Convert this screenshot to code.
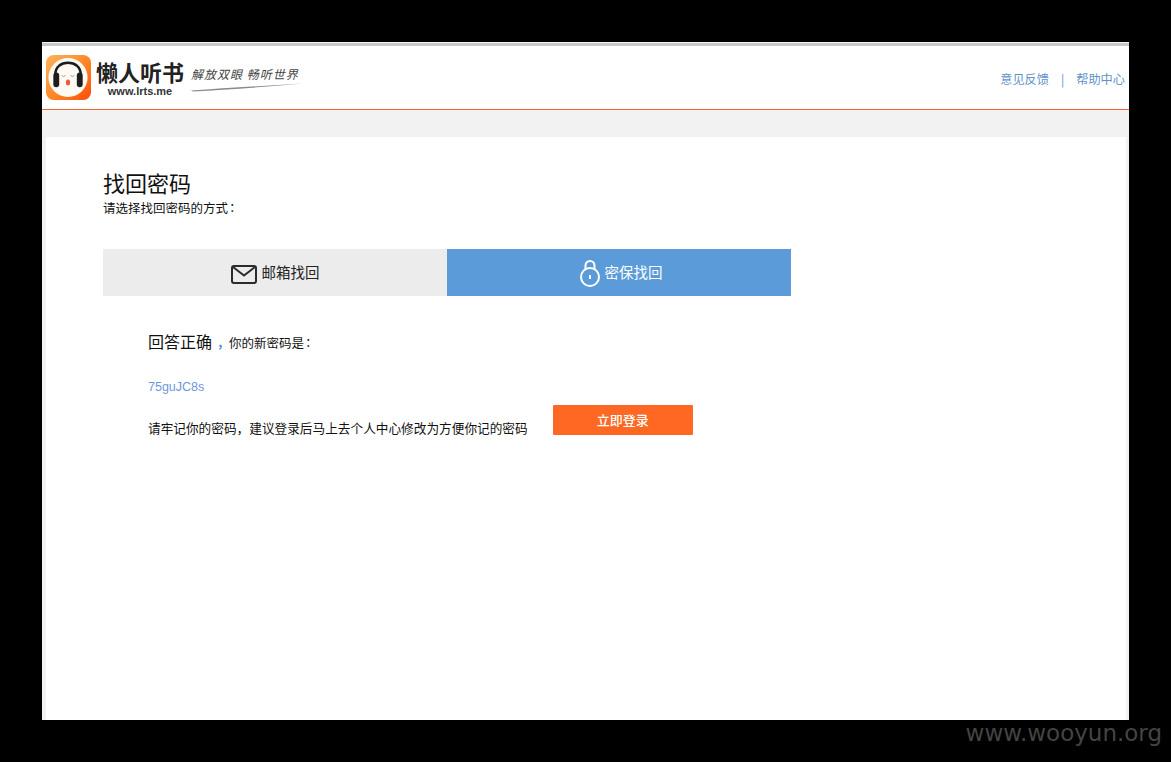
<script lang="ts">
    const links = ["意见反馈", "帮助中心"];
</script>

<div class="screen">
    <div class="page">
        <header class="top">
            <div class="brand">
                <svg class="app-icon" width="45" height="45" viewBox="0 0 46 46">
                    <defs>
                        <linearGradient id="iconBg" x1="0" y1="0" x2="1" y2="1">
                            <stop offset="0" stop-color="#ffb45c" />
                            <stop offset="0.6" stop-color="#ff7f1f" />
                            <stop offset="1" stop-color="#fc4a0c" />
                        </linearGradient>
                    </defs>
                    <rect width="46" height="46" rx="8" fill="url(#iconBg)" />
                    <circle cx="22.5" cy="23" r="20" fill="#fdf9f3" />
                    <path d="M9.5 27V20C9.5 12 15.5 8 22.5 8s13 4 13 12v7" fill="none" stroke="#1d1d1d" stroke-width="2.5" />
                    <rect x="7.5" y="18" width="6" height="15" rx="3" fill="#1d1d1d" />
                    <rect x="31.5" y="18" width="6" height="15" rx="3" fill="#1d1d1d" />
                    <path d="M16 21q2 2 4 0M25 21q2 2 4 0" fill="none" stroke="#888" stroke-width="0.8" />
                    <ellipse cx="22.5" cy="28" rx="2.2" ry="3" fill="#ef5a3c" />
                </svg>
                <div class="wordmark">
                    <span class="name">懒人听书</span>
                    <span class="url">www.lrts.me</span>
                </div>
                <div class="slogan">
                    <span>解放双眼 畅听世界</span>
                    <svg width="112" height="10" viewBox="0 0 112 10">
                        <path d="M0 8.5Q50 5 112 1.5Q50 7 2 9.5Z" fill="#8a8a8a" />
                    </svg>
                </div>
            </div>
            <nav class="links">
                <span>{links[0]}</span>
                <span class="sep">|</span>
                <span>{links[1]}</span>
            </nav>
        </header>

        <main class="band">
            <section class="card">
                <h1>找回密码</h1>
                <p class="hint">请选择找回密码的方式<span class="colon">：</span></p>

                <div class="tabs">
                    <div class="tab">
                        <svg class="mail" width="26" height="19" viewBox="0 0 26 19" fill="none" stroke="#2b2b2b" stroke-width="2">
                            <rect x="1" y="1" width="24" height="17" rx="2" />
                            <path d="M2 2l11 8.5L24 2" />
                        </svg>
                        <span>邮箱找回</span>
                    </div>
                    <div class="tab active">
                        <svg class="lock" width="20" height="27" viewBox="0 0 20 27" fill="none" stroke="#fff" stroke-width="2">
                            <circle cx="10" cy="17" r="9" />
                            <path d="M5.5 9.5V5.5a4.5 4.5 0 0 1 9 0V9.5" />
                            <path d="M10 15v4" />
                        </svg>
                        <span>密保找回</span>
                    </div>
                </div>

                <div class="result">
                    <p class="answer"><span class="big">回答正确</span><span class="comma">，</span>你的新密码是<span class="colon">：</span></p>
                    <p class="password">75guJC8s</p>
                    <div class="notice">
                        <p>请牢记你的密码，建议登录后马上去个人中心修改为方便你记的密码</p>
                        <button type="button">立即登录</button>
                    </div>
                </div>
            </section>
        </main>
    </div>
    <div class="watermark">www.wooyun.org</div>
</div>

<style>
    :global(body) {
        margin: 0;
        background: #000;
    }

    .screen {
        position: relative;
        width: 1171px;
        height: 762px;
        padding: 42px 42px 0;
        box-sizing: border-box;
        overflow: hidden;
        background: #000;
        font-family: "Noto Sans CJK SC", "Liberation Sans", sans-serif;
        color: #111;
    }

    .page {
        width: 1087px;
        height: 678px;
        display: flex;
        flex-direction: column;
        background: #f2f2f2;
    }

    .top {
        height: 64px;
        box-sizing: border-box;
        margin-top: 4px;
        padding: 0 4px;
        display: flex;
        align-items: center;
        justify-content: space-between;
        background: #fff;
        border-bottom: 1px solid #ee6a35;
        box-shadow: 0 -3px 0 #c9c9c9;
    }

    .brand {
        display: flex;
        align-items: center;
    }

    .wordmark {
        display: flex;
        flex-direction: column;
        align-items: center;
        margin-left: 5px;
    }

    .name {
        font-size: 22px;
        line-height: 28px;
        font-weight: 700;
        color: #222;
    }

    .url {
        font-family: "Liberation Sans", sans-serif;
        font-size: 11px;
        line-height: 13px;
        font-weight: 700;
        color: #333;
    }

    .slogan {
        display: flex;
        flex-direction: column;
        margin-left: 7px;
        margin-top: 2px;
    }

    .slogan span {
        font-size: 12px;
        line-height: 16px;
        letter-spacing: 1px;
        color: #444;
        font-style: italic;
        white-space: nowrap;
    }

    .links {
        display: flex;
        gap: 12px;
        margin-top: 2px;
        font-size: 12.2px;
        color: #5f93c9;
    }

    .band {
        flex: 1;
        padding: 27px 3px 0 4px;
        display: flex;
    }

    .card {
        flex: 1;
        background: #fff;
        padding: 31px 57px 0;
    }

    h1 {
        margin: 0;
        font-size: 22px;
        line-height: 28px;
        font-weight: 400;
    }

    .hint {
        margin: 4px 0 0;
        font-size: 12.5px;
        line-height: 16px;
    }

    .colon {
        margin-left: -2px;
        font-family: "Noto Sans CJK TC", sans-serif;
    }

    .tabs {
        width: 688px;
        height: 47px;
        margin-top: 33px;
        display: flex;
    }

    .tab {
        flex: 0 0 344px;
        box-sizing: border-box;
        padding: 0 0 2px;
        display: flex;
        align-items: center;
        justify-content: center;
        gap: 5px;
        background: #ececec;
        font-size: 14.5px;
        color: #222;
    }

    .tab.active {
        padding-left: 4px;
        background: #5b9bd9;
        color: #fff;
    }

    .mail {
        margin-top: 5px;
    }

    .lock {
        margin-top: 4px;
    }

    .result {
        padding: 34px 0 0 45px;
    }

    .result p {
        margin: 0;
    }

    .answer {
        font-size: 12.5px;
        line-height: 22px;
    }

    .big {
        font-size: 16px;
    }

    .comma {
        padding-left: 5px;
        font-size: 12px;
        font-weight: 700;
        color: #4a8ccf;
    }

    .result .password {
        margin-top: 24px;
        font-family: "Liberation Sans", sans-serif;
        font-size: 12.5px;
        line-height: 18px;
        color: #6f97dc;
    }

    .notice {
        margin-top: 9px;
        display: flex;
        align-items: flex-end;
        gap: 25px;
        font-size: 12.66px;
        line-height: 18px;
    }

    .result .notice p {
        margin-bottom: -2px;
    }

    button {
        width: 140px;
        height: 30px;
        padding: 0 0 2px;
        border: 0;
        border-radius: 1px;
        background: #ff6822;
        color: #fff;
        font: 500 13px "Noto Sans CJK SC", sans-serif;
    }

    .watermark {
        position: absolute;
        right: 9px;
        bottom: 15px;
        font-family: "DejaVu Sans", sans-serif;
        font-size: 23px;
        line-height: 28px;
        color: #444;
    }
</style>
